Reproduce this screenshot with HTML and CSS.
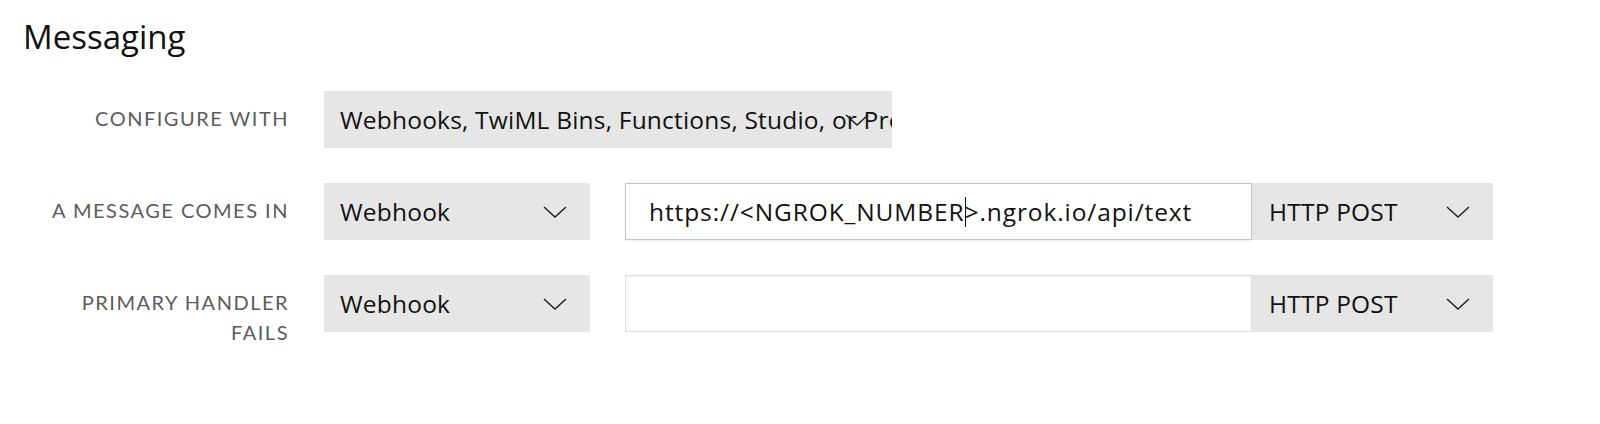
FILE: index.html
```html
<!DOCTYPE html>
<html>

<head>
    <link rel="stylesheet" href="styles.css">
    <title>Messaging</title>
</head>

<body>
    <div class="section">
        <h2 class="title">Messaging</h2>
        <div class="form">
            <label class="label">Configure with</label>
            <div class="controls">
                <div class="select wide">
                    <span class="value">Webhooks, TwiML Bins, Functions, Studio, or Proxy</span>
                    <svg class="chevron" viewBox="0 0 24 12"><path d="M1 1 L12 11 L23 1" /></svg>
                </div>
            </div>

            <label class="label">A message comes in</label>
            <div class="controls">
                <div class="select small">
                    <span class="value">Webhook</span>
                    <svg class="chevron" viewBox="0 0 24 12"><path d="M1 1 L12 11 L23 1" /></svg>
                </div>
                <div class="input focused">
                    <span class="text">https://&lt;NGROK_NUMBER<span class="caret"></span>&gt;.ngrok.io/api/text</span>
                </div>
                <div class="select method">
                    <span class="value">HTTP POST</span>
                    <svg class="chevron" viewBox="0 0 24 12"><path d="M1 1 L12 11 L23 1" /></svg>
                </div>
            </div>

            <label class="label">Primary handler fails</label>
            <div class="controls">
                <div class="select small">
                    <span class="value">Webhook</span>
                    <svg class="chevron" viewBox="0 0 24 12"><path d="M1 1 L12 11 L23 1" /></svg>
                </div>
                <div class="input"></div>
                <div class="select method">
                    <span class="value">HTTP POST</span>
                    <svg class="chevron" viewBox="0 0 24 12"><path d="M1 1 L12 11 L23 1" /></svg>
                </div>
            </div>
        </div>
    </div>
</body>

</html>
```

FILE: styles.css
```css
body {
    margin: 0;
    background-color: white;
    font-family: 'Open Sans', Lato, sans-serif;
    color: #111;
}

.section {
    padding: 19px 0 0 23px;
}

.title {
    margin: 0;
    font-size: 33px;
    font-weight: normal;
    line-height: 36px;
}

.form {
    display: grid;
    grid-template-columns: 266px auto;
    column-gap: 35px;
    row-gap: 35px;
    margin-top: 36px;
}

.label {
    text-align: right;
    text-transform: uppercase;
    font-family: Lato, sans-serif;
    color: #5c5c5c;
    font-size: 20px;
    letter-spacing: 1.5px;
    line-height: 30px;
    padding-top: 12px;
}

.controls {
    display: flex;
}

.select {
    display: flex;
    align-items: center;
    height: 57px;
    box-sizing: border-box;
    background-color: #e6e6e6;
    padding: 0 23px 0 16px;
    overflow: hidden;
}

.select .value {
    flex: 1;
    min-width: 0;
    white-space: nowrap;
    font-size: 24.5px;
    letter-spacing: 0.2px;
}

.chevron {
    width: 24px;
    height: 12px;
    flex: none;
    fill: none;
    stroke: #222;
    stroke-width: 1.5;
}

.wide {
    width: 568px;
}

.small {
    width: 266px;
    margin-right: 35px;
}

.method {
    width: 241px;
    padding-left: 17px;
}

.input {
    display: flex;
    align-items: center;
    width: 627px;
    height: 57px;
    box-sizing: border-box;
    border: 1px solid #dcdcdc;
    box-shadow: inset 1px 1px 3px rgba(0, 0, 0, 0.06);
    padding-left: 23px;
}

.input.focused {
    border-color: #c4c4c4;
    box-shadow: 0 1px 2px rgba(0, 0, 0, 0.08);
}

.input .text {
    font-size: 24.5px;
    letter-spacing: 0.9px;
    white-space: nowrap;
}

.caret {
    display: inline-block;
    width: 0;
    height: 30px;
    border-left: 1px solid #111;
    vertical-align: middle;
    margin: -4px -1px 0 0;
}
```
